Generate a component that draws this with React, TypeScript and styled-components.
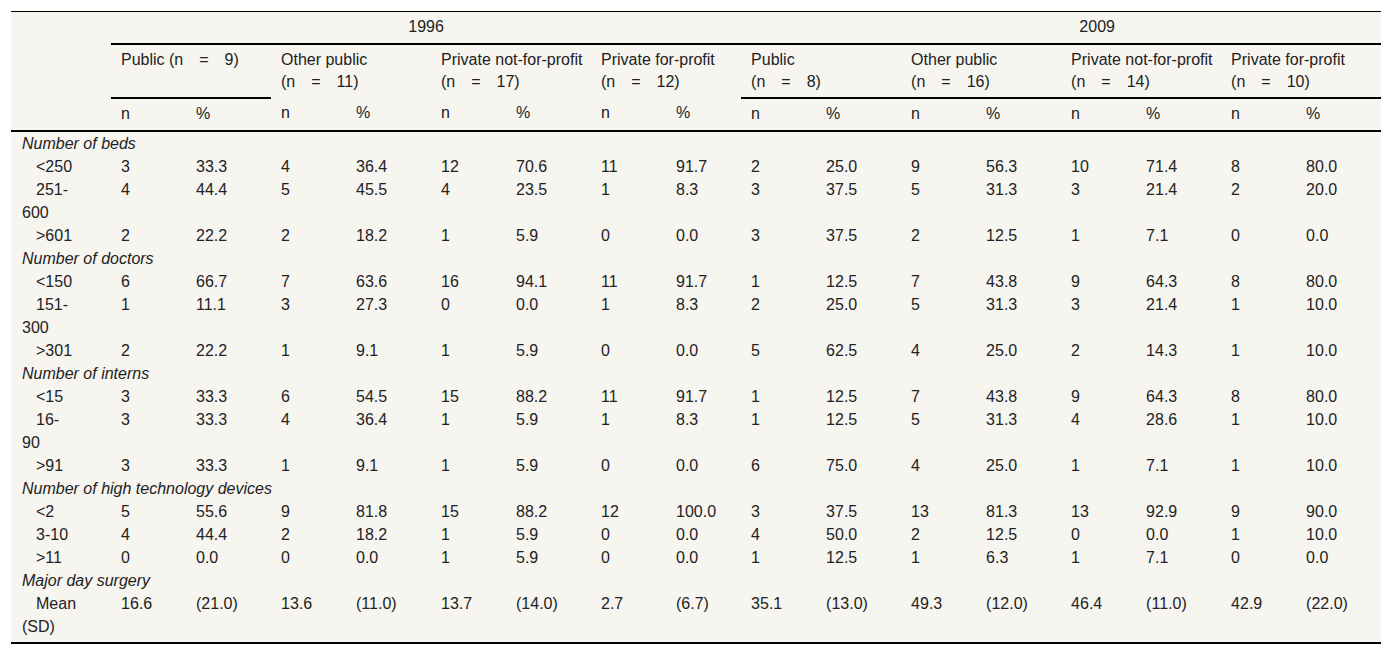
import React from "react";
import styled, { createGlobalStyle } from "styled-components";

const GlobalStyle = createGlobalStyle`
  html, body { margin: 0; padding: 0; background: #ffffff; }
  body { font-family: "Liberation Sans", Arial, sans-serif; color: #222; }
`;

const Page = styled.div`
  padding: 11px;
`;

const Table = styled.table`
  width: 1370px;
  table-layout: fixed;
  border-collapse: collapse;
  background: #f7f5f0;
  font-size: 16px;
  border-top: 1px solid #000;
  border-bottom: 2px solid #000;
`;

const HeadCell = styled.th<{ $line?: boolean; $center?: boolean; $shift?: number; $first?: boolean }>`
  font-weight: normal;
  text-align: ${(p) => (p.$center ? "center" : "left")};
  vertical-align: top;
  line-height: 22px;
  padding: ${(p) => (p.$first ? "4px 10px 4px 11px" : `4px 10px 5px ${10 + (p.$shift ?? 0)}px`)};
  border-bottom: ${(p) => (p.$line ? "2px solid #000" : "none")};
  white-space: nowrap;
`;

const GroupCell = styled(HeadCell)`
  padding: 4px 10px 4px 10px;
`;

const BodyRow = styled.tr<{ $last?: boolean }>`
  & > td {
    padding-bottom: ${(p) => (p.$last ? "4px" : "0")};
  }
`;

const LabelCell = styled.td<{ $sub?: boolean }>`
  padding: 0 10px 0 11px;
  line-height: 23px;
  vertical-align: top;
  text-indent: ${(p) => (p.$sub ? "14px" : "0")};
`;

const SectionCell = styled.td`
  padding: 0 10px 0 11px;
  line-height: 23px;
  font-style: italic;
  white-space: nowrap;
`;

const NumCell = styled.td`
  padding: 0 10px;
  line-height: 23px;
  vertical-align: top;
  white-space: nowrap;
`;

const E = "\u2003";

const groups: { title: string; n: number; split: boolean; line: boolean }[] = [
  { title: "Public", n: 9, split: false, line: true },
  { title: "Other public", n: 11, split: true, line: false },
  { title: "Private not-for-profit", n: 17, split: true, line: false },
  { title: "Private for-profit", n: 12, split: true, line: false },
  { title: "Public", n: 8, split: true, line: true },
  { title: "Other public", n: 16, split: true, line: true },
  { title: "Private not-for-profit", n: 14, split: true, line: true },
  { title: "Private for-profit", n: 10, split: true, line: true },
];

type Row =
  | { kind: "section"; label: string }
  | { kind: "data"; label: string[]; values: string[] };

const d = (label: string[], s: string): Row => ({ kind: "data", label, values: s.split(" ") });

const rows: Row[] = [
  { kind: "section", label: "Number of beds" },
  d(["<250"], "3 33.3 4 36.4 12 70.6 11 91.7 2 25.0 9 56.3 10 71.4 8 80.0"),
  d(["251-", "600"], "4 44.4 5 45.5 4 23.5 1 8.3 3 37.5 5 31.3 3 21.4 2 20.0"),
  d([">601"], "2 22.2 2 18.2 1 5.9 0 0.0 3 37.5 2 12.5 1 7.1 0 0.0"),
  { kind: "section", label: "Number of doctors" },
  d(["<150"], "6 66.7 7 63.6 16 94.1 11 91.7 1 12.5 7 43.8 9 64.3 8 80.0"),
  d(["151-", "300"], "1 11.1 3 27.3 0 0.0 1 8.3 2 25.0 5 31.3 3 21.4 1 10.0"),
  d([">301"], "2 22.2 1 9.1 1 5.9 0 0.0 5 62.5 4 25.0 2 14.3 1 10.0"),
  { kind: "section", label: "Number of interns" },
  d(["<15"], "3 33.3 6 54.5 15 88.2 11 91.7 1 12.5 7 43.8 9 64.3 8 80.0"),
  d(["16-", "90"], "3 33.3 4 36.4 1 5.9 1 8.3 1 12.5 5 31.3 4 28.6 1 10.0"),
  d([">91"], "3 33.3 1 9.1 1 5.9 0 0.0 6 75.0 4 25.0 1 7.1 1 10.0"),
  { kind: "section", label: "Number of high technology devices" },
  d(["<2"], "5 55.6 9 81.8 15 88.2 12 100.0 3 37.5 13 81.3 13 92.9 9 90.0"),
  d(["3-10"], "4 44.4 2 18.2 1 5.9 0 0.0 4 50.0 2 12.5 0 0.0 1 10.0"),
  d([">11"], "0 0.0 0 0.0 1 5.9 0 0.0 1 12.5 1 6.3 1 7.1 0 0.0"),
  { kind: "section", label: "Major day surgery" },
  d(["Mean", "(SD)"], "16.6 (21.0) 13.6 (11.0) 13.7 (14.0) 2.7 (6.7) 35.1 (13.0) 49.3 (12.0) 46.4 (11.0) 42.9 (22.0)"),
];

const colWidths = [100, 75, 85, 75, 85, 75, 85, 75, 75, 75, 85, 75, 85, 75, 85, 75, 85];

export default function App() {
  return (
    <>
      <GlobalStyle />
      <Page>
        <Table>
          <colgroup>
            {colWidths.map((w, i) => (
              <col key={i} style={{ width: w }} />
            ))}
          </colgroup>
          <thead>
            <tr>
              <HeadCell rowSpan={3} $line $first />
              <HeadCell colSpan={8} $center $line>
                1996
              </HeadCell>
              <HeadCell colSpan={8} $center $line $shift={72}>
                2009
              </HeadCell>
            </tr>
            <tr>
              {groups.map((g, i) => (
                <GroupCell key={i} colSpan={2} $line={g.line}>
                  {g.split ? (
                    <>
                      {g.title}
                      <br />
                      {`(n${E}=${E}${g.n})`}
                    </>
                  ) : (
                    `${g.title} (n${E}=${E}${g.n})`
                  )}
                </GroupCell>
              ))}
            </tr>
            <tr>
              {groups.map((_, i) => (
                <React.Fragment key={i}>
                  <HeadCell $line>n</HeadCell>
                  <HeadCell $line>%</HeadCell>
                </React.Fragment>
              ))}
            </tr>
          </thead>
          <tbody>
            {rows.map((r, i) =>
              r.kind === "section" ? (
                <BodyRow key={i}>
                  <SectionCell colSpan={17}>{r.label}</SectionCell>
                </BodyRow>
              ) : (
                <BodyRow key={i} $last={i === rows.length - 1}>
                  <LabelCell $sub>
                    {r.label.map((l, j) => (
                      <React.Fragment key={j}>
                        {j > 0 && <br />}
                        {l}
                      </React.Fragment>
                    ))}
                  </LabelCell>
                  {r.values.map((v, j) => (
                    <NumCell key={j}>{v}</NumCell>
                  ))}
                </BodyRow>
              )
            )}
          </tbody>
        </Table>
      </Page>
    </>
  );
}
